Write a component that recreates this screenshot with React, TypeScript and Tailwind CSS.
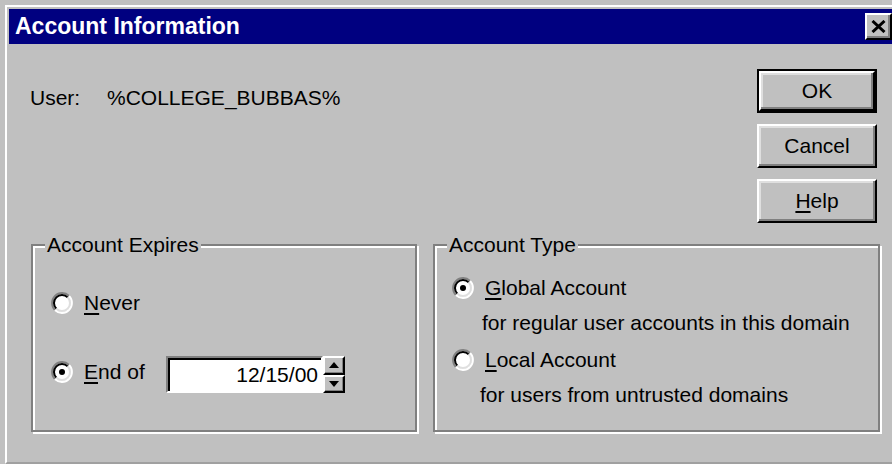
import React from 'react';

const font = { fontFamily: '"Liberation Sans", Arial, sans-serif' };

// Sunken Win95-style radio button
function Radio({ checked }: { checked?: boolean }) {
    return (
        <svg width="22" height="22" viewBox="0 0 22 22" className="shrink-0">
            <circle cx="11" cy="11" r="9" fill="#fff" />
            <path d="M3.93 18.07 A10 10 0 0 1 18.07 3.93" fill="none" stroke="#808080" strokeWidth="2" />
            <path d="M18.07 3.93 A10 10 0 0 1 3.93 18.07" fill="none" stroke="#fff" strokeWidth="2" />
            <path d="M5.34 16.66 A8 8 0 0 1 16.66 5.34" fill="none" stroke="#000" strokeWidth="2" />
            <path d="M16.66 5.34 A8 8 0 0 1 5.34 16.66" fill="none" stroke="#dfdfdf" strokeWidth="2" />
            {checked && <circle cx="11" cy="11" r="3" fill="#000" />}
        </svg>
    );
}

function PushButton({ children, isDefault }: { children: React.ReactNode; isDefault?: boolean }) {
    const face = (
        <div className="flex-1 flex items-center justify-center border-2 border-t-white border-l-white border-r-black border-b-black shadow-[inset_-2px_-2px_0_#808080,inset_2px_2px_0_#dfdfdf] text-[21px] text-black">
            {children}
        </div>
    );
    if (isDefault) {
        return <div className="w-[120px] h-[44px] flex border-2 border-black">{face}</div>;
    }
    return <div className="w-[120px] h-[44px] flex">{face}</div>;
}

function GroupBox({ title, className, children }: { title: string; className: string; children: React.ReactNode }) {
    return (
        <div className={`relative border-2 border-[#808080] shadow-[inset_2px_2px_0_#fff,2px_2px_0_#fff] ${className}`}>
            <span className="absolute -top-[13px] left-[12px] px-[2px] bg-[#c0c0c0] text-[21px] leading-[24px] text-black">
                {title}
            </span>
            {children}
        </div>
    );
}

function SpinButton({ up }: { up?: boolean }) {
    return (
        <div className="flex-1 flex items-center justify-center bg-[#c0c0c0] border-t-2 border-l-2 border-t-white border-l-white border-b-2 border-r-2 border-b-black border-r-black shadow-[inset_-1px_-1px_0_#808080]">
            <svg width="10" height="6" viewBox="0 0 10 6">
                {up ? <polygon points="5,0 10,6 0,6" fill="#000" /> : <polygon points="0,0 10,0 5,6" fill="#000" />}
            </svg>
        </div>
    );
}

export default function App() {
    return (
        <div className="w-[892px] h-[464px] bg-[#c0c0c0] pt-[5px] pl-[5px] overflow-hidden flex flex-col" style={font}>
            <div className="flex-1 flex flex-col border-l-2 border-t-2 border-white pt-[2px] pl-[2px] border-b-2 border-b-[#a0a0a0]">
                {/* Caption */}
                <div className="h-[35px] bg-[#000080] flex items-center pl-[6px] shrink-0">
                    <span className="text-white font-bold text-[23px] leading-none">Account Information</span>
                    <div className="ml-auto mb-[1px] w-[27px] h-[27px] flex items-center justify-center bg-[#c0c0c0] border-2 border-t-white border-l-white border-r-black border-b-black shadow-[inset_-2px_-2px_0_#808080]">
                        <svg width="15" height="13" viewBox="0 0 15 13">
                            <path d="M1.5 1 L13.5 12 M13.5 1 L1.5 12" stroke="#000" strokeWidth="3" />
                        </svg>
                    </div>
                </div>

                {/* Body */}
                <div className="flex-1 flex flex-col">
                    <div className="flex items-start">
                        <div className="mt-[42px] ml-[21px] flex text-[21px] leading-[24px] text-black">
                            <span className="w-[77px]">User:</span>
                            <span>%COLLEGE_BUBBAS%</span>
                        </div>
                        <div className="ml-auto mr-[15px] mt-[25px] flex flex-col gap-[11px]">
                            <PushButton isDefault>OK</PushButton>
                            <PushButton>Cancel</PushButton>
                            <PushButton>
                                <span><u className="underline-offset-[3px]">H</u>elp</span>
                            </PushButton>
                        </div>
                    </div>

                    <div className="flex gap-[16px] ml-[22px] mt-[21px]">
                        <GroupBox title="Account Expires" className="w-[386px] h-[188px]">
                            <div className="flex flex-col pl-[18px] pt-[45px] text-[21px] leading-[24px] text-black">
                                <div className="flex items-center h-[24px] gap-[11px]">
                                    <Radio />
                                    <span><u className="underline-offset-[3px]">N</u>ever</span>
                                </div>
                                <div className="flex items-center mt-[41px] h-[37px]">
                                    <div className="flex items-center gap-[11px] w-[115px] mb-[6px]">
                                        <Radio checked />
                                        <span><u className="underline-offset-[3px]">E</u>nd of</span>
                                    </div>
                                    <div className="flex h-[37px]">
                                        <div className="w-[157px] bg-white border-2 border-t-[#808080] border-l-[#808080] border-b-white border-r-white shadow-[inset_2px_2px_0_#000] flex items-center justify-end pr-[3px]">
                                            12/15/00
                                        </div>
                                        <div className="w-[22px] flex flex-col">
                                            <SpinButton up />
                                            <SpinButton />
                                        </div>
                                    </div>
                                </div>
                            </div>
                        </GroupBox>

                        <GroupBox title="Account Type" className="w-[447px] h-[188px]">
                            <div className="flex flex-col pl-[17px] pt-[25px] text-[21px] leading-[24px] text-black">
                                <div className="flex items-center h-[34px] gap-[11px]">
                                    <Radio checked />
                                    <span><u className="underline-offset-[3px]">G</u>lobal Account</span>
                                </div>
                                <div className="flex items-center h-[36px] pl-[30px]">for regular user accounts in this domain</div>
                                <div className="flex items-center h-[38px] gap-[11px]">
                                    <Radio />
                                    <span><u className="underline-offset-[3px]">L</u>ocal Account</span>
                                </div>
                                <div className="flex items-center h-[32px] pl-[28px]">for users from untrusted domains</div>
                            </div>
                        </GroupBox>
                    </div>
                </div>
            </div>
        </div>
    );
}
